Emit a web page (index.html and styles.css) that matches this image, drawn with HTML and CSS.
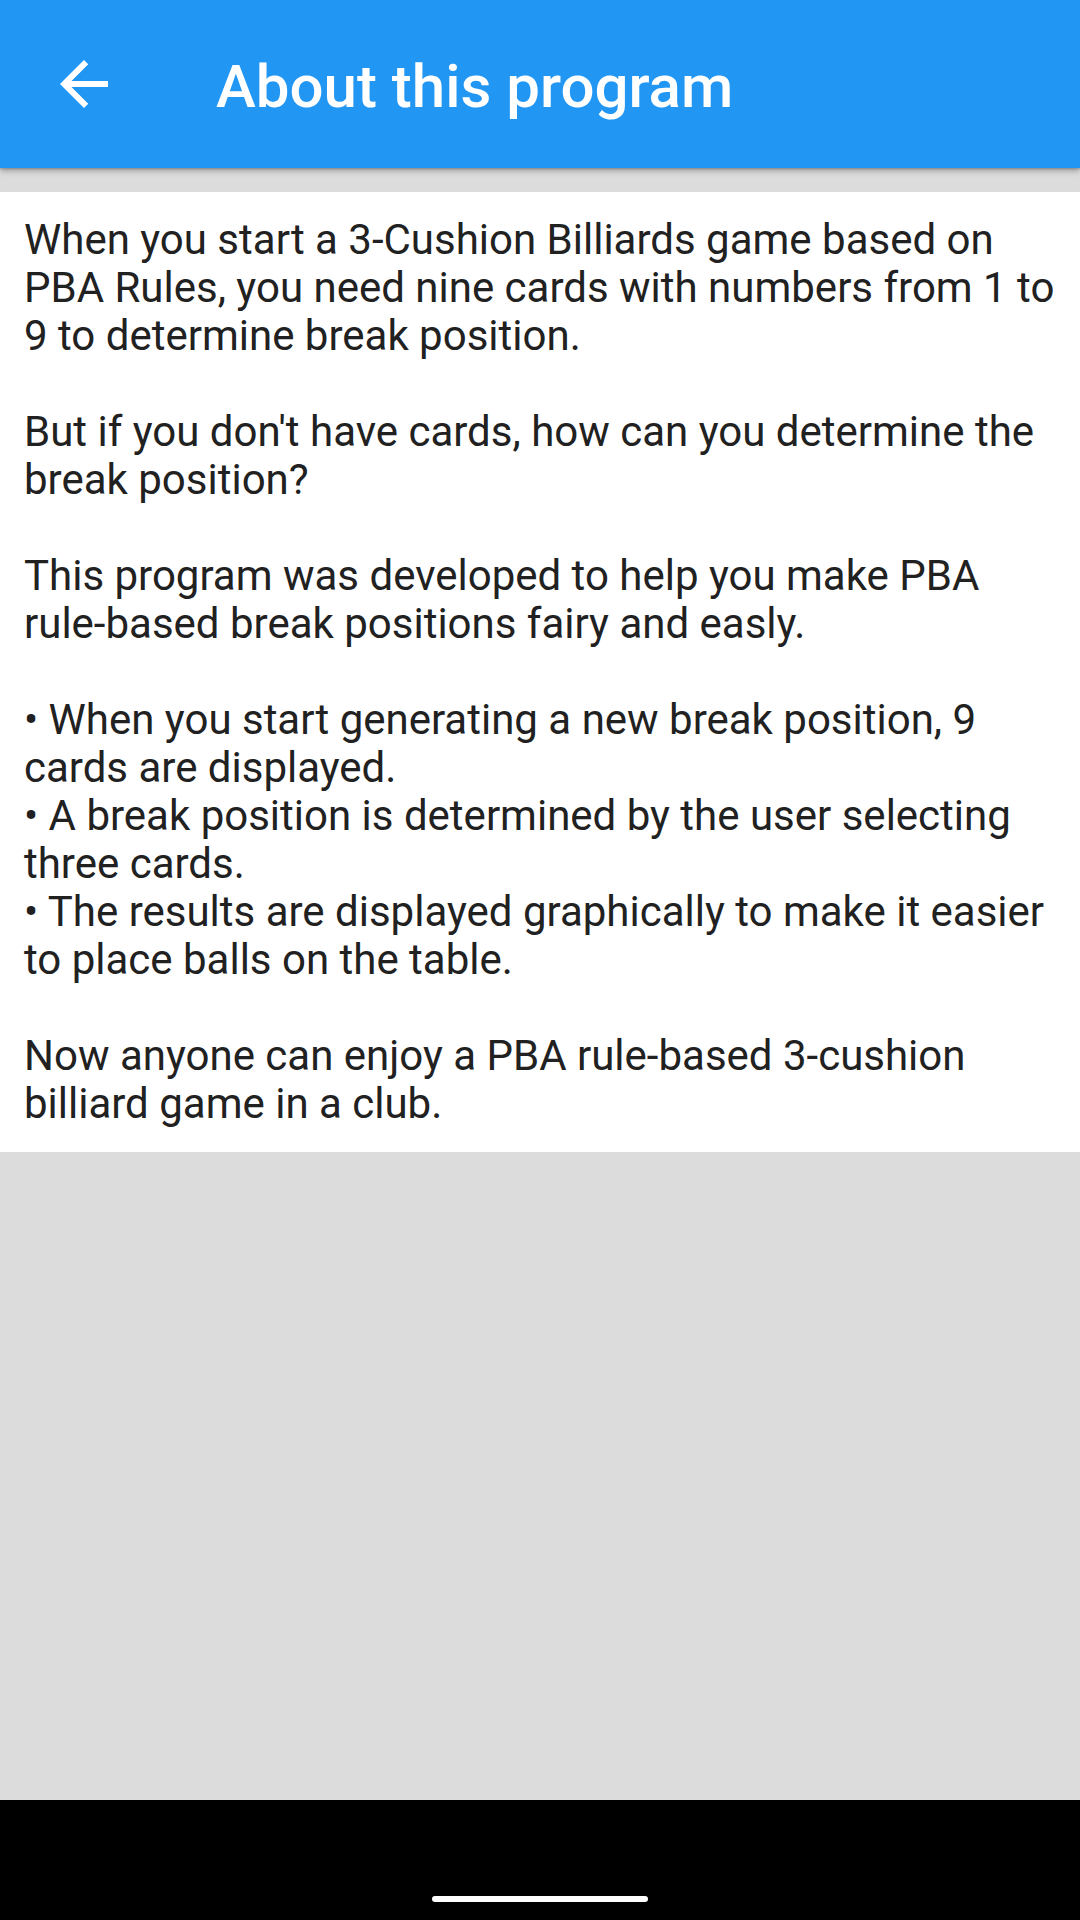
FILE: index.html
```html
<!DOCTYPE html>
<html lang="en">
<head>
<meta charset="utf-8">
<title>About this program</title>
<link rel="stylesheet" href="styles.css">
</head>
<body>
<div class="screen">
  <header class="appbar">
    <div class="leading">
      <svg class="back-icon" viewBox="0 0 24 24" width="72" height="72" aria-hidden="true">
        <path fill="#ffffff" d="M20 11H7.83l5.59-5.59L12 4l-8 8 8 8 1.41-1.41L7.83 13H20v-2z"/>
      </svg>
    </div>
    <h1 class="title">About this program</h1>
  </header>
  <main class="content">
    <p class="para">When you start a 3-Cushion Billiards game based on<br>PBA Rules, you need nine cards with numbers from 1 to<br>9 to determine break position.</p>
    <p class="para">But if you don't have cards, how can you determine the<br>break position?</p>
    <p class="para">This program was developed to help you make PBA<br>rule-based break positions fairy and easly.</p>
    <p class="para">• When you start generating a new break position, 9<br>cards are displayed.<br>• A break position is determined by the user selecting<br>three cards.<br>• The results are displayed graphically to make it easier<br>to place balls on the table.</p>
    <p class="para">Now anyone can enjoy a PBA rule-based 3-cushion<br>billiard game in a club.</p>
  </main>
  <div class="filler"></div>
  <footer class="navbar">
    <div class="home-indicator"></div>
  </footer>
</div>
</body>
</html>
```

FILE: styles.css
```css
html, body {
  margin: 0;
  padding: 0;
}

body {
  width: 1080px;
  height: 1920px;
  overflow: hidden;
  background: #dcdcdc;
  font-family: Roboto, "Noto Sans", "Liberation Sans", sans-serif;
}

.screen {
  display: flex;
  flex-direction: column;
  height: 1920px;
}

.appbar {
  position: relative;
  z-index: 2;
  display: flex;
  align-items: center;
  height: 168px;
  flex: 0 0 168px;
  background: #2196f3;
  box-shadow: 0 3px 6px rgba(0, 0, 0, 0.28), 0 1px 2px rgba(0, 0, 0, 0.2);
}

.leading {
  display: flex;
  align-items: center;
  justify-content: center;
  width: 168px;
  height: 168px;
  flex: 0 0 168px;
}

.back-icon {
  display: block;
}

.title {
  margin: 5px 0 0 48px;
  color: #ffffff;
  font-size: 60px;
  font-weight: 500;
  line-height: 1;
  letter-spacing: 0;
}

.content {
  margin-top: 24px;
  background: #ffffff;
  padding: 24px 21px 24px 24px;
  color: #212121;
  font-size: 42px;
  line-height: 48px;
}

.para {
  margin: 0 0 48px 0;
  white-space: nowrap;
}

.para:last-child {
  margin-bottom: 0;
}

.filler {
  flex: 1 1 auto;
}

.navbar {
  flex: 0 0 120px;
  height: 120px;
  background: #000000;
  display: flex;
  justify-content: center;
  align-items: flex-end;
  padding-bottom: 18px;
  box-sizing: border-box;
}

.home-indicator {
  width: 216px;
  height: 6px;
  border-radius: 3px;
  background: #ffffff;
}
```
